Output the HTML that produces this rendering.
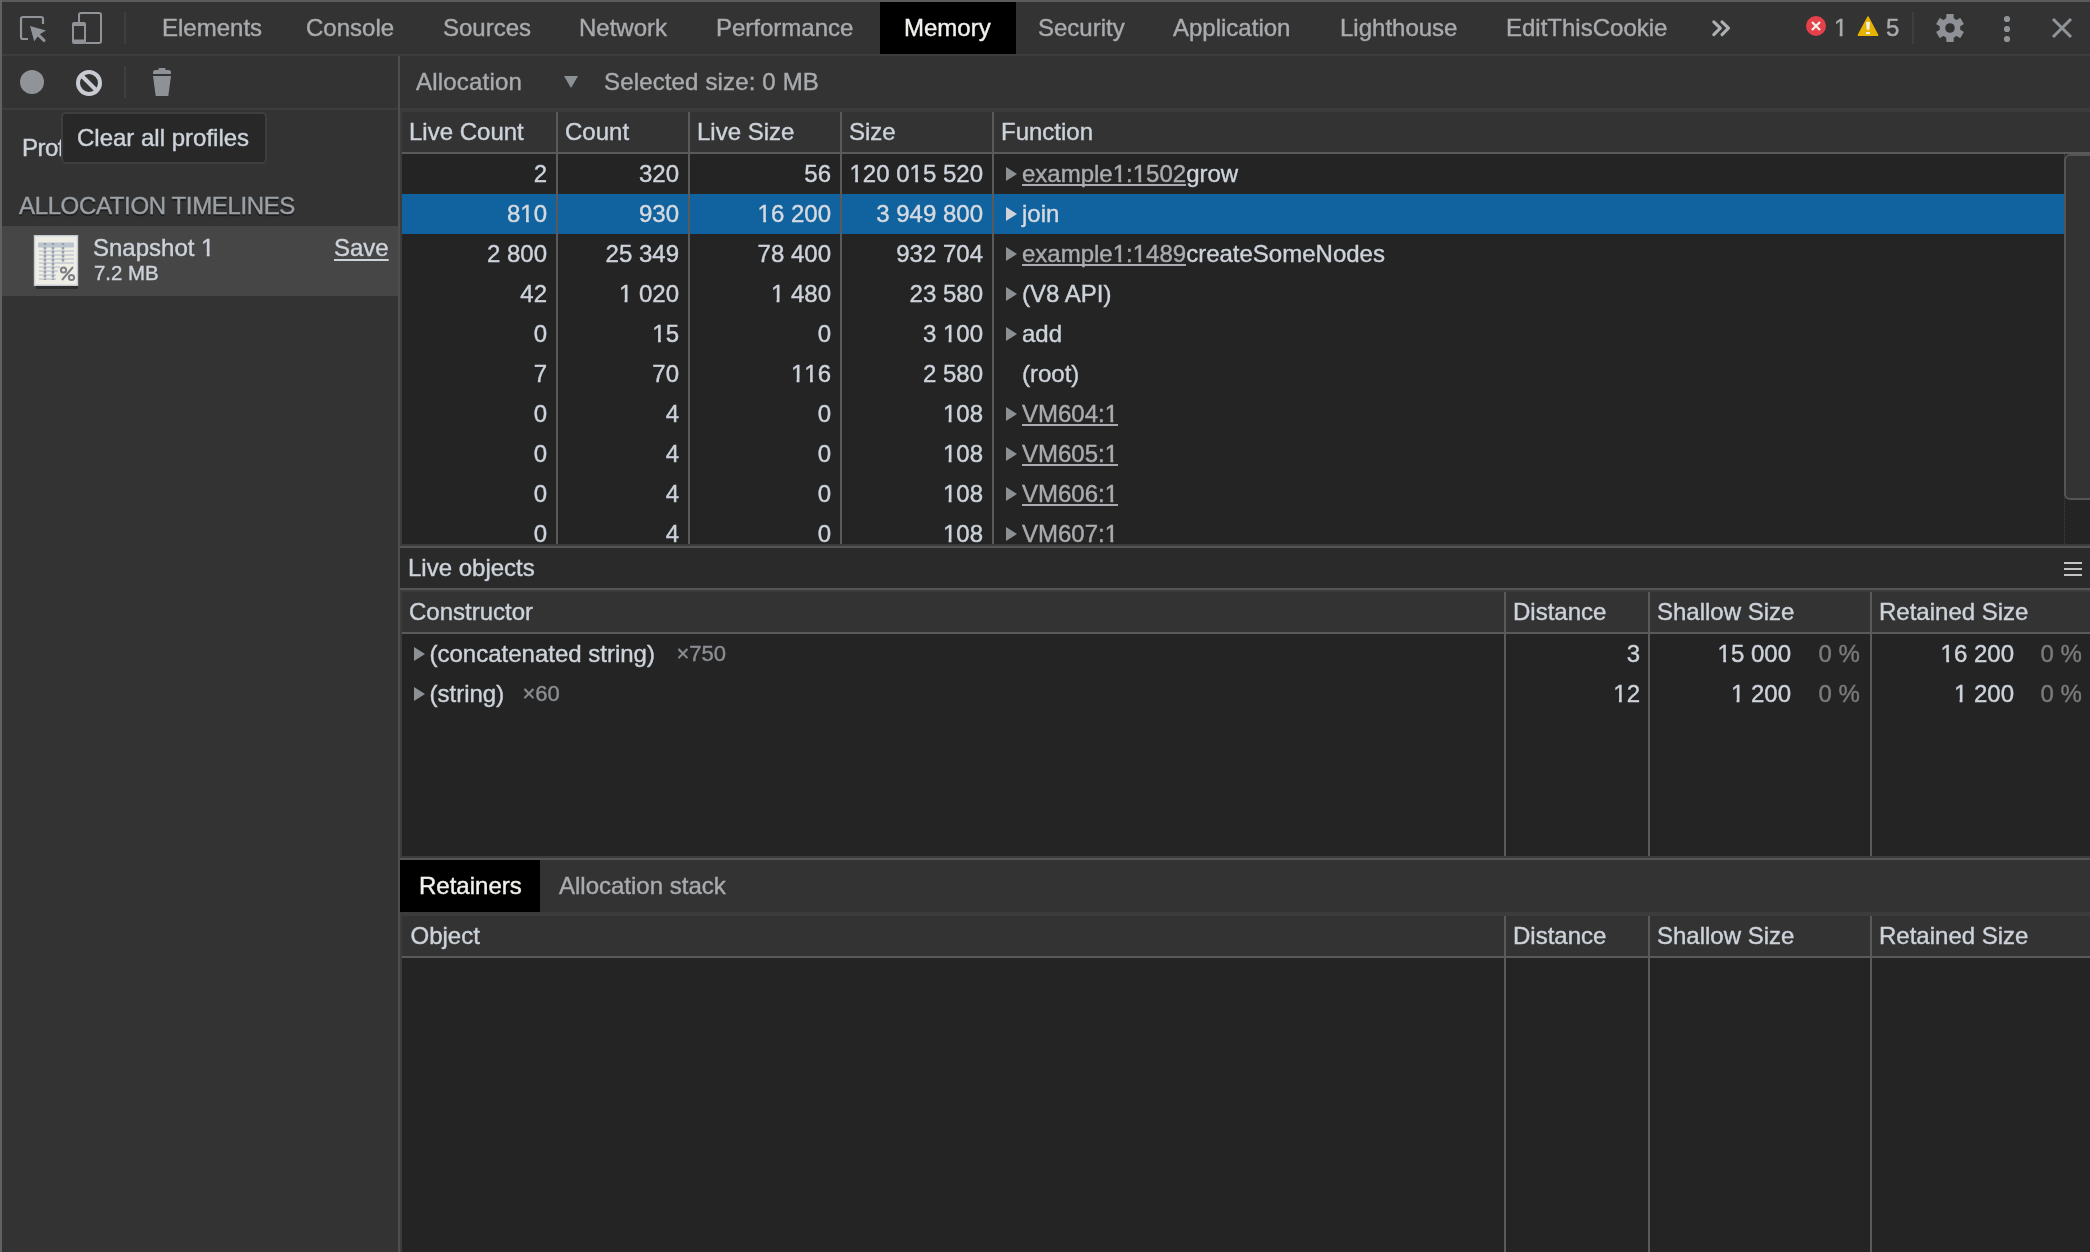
<!DOCTYPE html>
<html><head><meta charset="utf-8">
<style>
*{box-sizing:border-box;margin:0;padding:0}
html,body{width:2090px;height:1252px;overflow:hidden;background:#333;font-family:"Liberation Sans",sans-serif;font-size:24px;color:#cdd3da}
#root{position:absolute;left:0;top:0;width:2090px;height:1252px;overflow:hidden;will-change:transform;background:#333}
.t,.tab{-webkit-text-stroke:0.4px currentColor}
.one{display:inline-block;line-height:normal;clip-path:polygon(0 0,100% 0,100% 19.4px,8.5px 19.4px,8.5px 100%,5.7px 100%,5.7px 19.4px,0 19.4px)}
.a{position:absolute}
.t{position:absolute;white-space:nowrap;line-height:40px;height:40px}
.tab{position:absolute;top:2px;height:52px;line-height:52px;color:#a9abae;white-space:nowrap}
.hl{position:absolute;background:#5a5a5a}
.num{position:absolute;text-align:right;white-space:nowrap;line-height:40px;height:40px}
.tri{position:absolute;width:0;height:0;border-top:7px solid transparent;border-bottom:7px solid transparent;border-left:11px solid #8c9196}
.lnk{color:#a9abae;background:linear-gradient(#a9abae,#a9abae) no-repeat 0 24px/100% 2px}
.dim{color:#7a7a7a}
</style></head><body><div id="root">
<!-- outer borders -->
<div class="a" style="left:0;top:0;width:2090px;height:2px;background:#5b5b5b"></div>
<div class="a" style="left:0;top:0;width:2px;height:1252px;background:#606266"></div>

<!-- ===== TAB BAR ===== -->
<div class="a" style="left:2px;top:54px;width:2088px;height:2px;background:#3d3d3d"></div>
<svg class="a" style="left:16px;top:10px" width="36" height="36" viewBox="16 10 36 36">
 <path d="M28 39H23a2 2 0 0 1-2-2V19a2 2 0 0 1 2-2H41a2 2 0 0 1 2 2V24" fill="none" stroke="#909499" stroke-width="2.2"/>
 <path d="M30 26L46 30.5L40.2 34L37.8 36.4L34.2 41.2Z" fill="#909499"/>
 <path d="M38.6 35.2L44 40.4" stroke="#909499" stroke-width="3" stroke-linecap="round"/>
</svg>
<svg class="a" style="left:68px;top:8px" width="40" height="40" viewBox="68 8 40 40">
 <rect x="79" y="13" width="22" height="30" rx="2" fill="none" stroke="#909499" stroke-width="2"/>
 <rect x="72" y="22" width="14" height="22" rx="2" fill="#333"/>
 <path d="M74 22h10a2 2 0 0 1 2 2v18a2 2 0 0 1-2 2h-10a2 2 0 0 1-2-2v-18a2 2 0 0 1 2-2zM74 26v13.5h10V26z" fill="#909499" fill-rule="evenodd"/>
</svg>
<div class="a" style="left:124px;top:12px;width:2px;height:32px;background:#3f3f3f"></div>

<div class="tab" style="left:138px;padding:0 24px">Elements</div>
<div class="tab" style="left:282px;padding:0 24px">Console</div>
<div class="tab" style="left:419px;padding:0 24px">Sources</div>
<div class="tab" style="left:555px;padding:0 24px">Network</div>
<div class="tab" style="left:692px;padding:0 24px">Performance</div>
<div class="tab" style="left:880px;width:136px;padding:0 24px;background:#000;color:#f2f2ee">Memory</div>
<div class="tab" style="left:1014px;padding:0 24px">Security</div>
<div class="tab" style="left:1149px;padding:0 24px">Application</div>
<div class="tab" style="left:1316px;padding:0 24px">Lighthouse</div>
<div class="tab" style="left:1482px;padding:0 24px">EditThisCookie</div>
<svg class="a" style="left:1706px;top:16px" width="30" height="24" viewBox="1706 16 30 24">
 <path d="M1713.8 21.8L1720.3 28.2L1713.8 34.6M1722 21.8L1728.5 28.2L1722 34.6" fill="none" stroke="#aeb1b4" stroke-width="3.1" stroke-linecap="round" stroke-linejoin="round"/>
</svg>
<!-- error / warning -->
<svg class="a" style="left:1804px;top:14px" width="24" height="24" viewBox="1804 14 24 24">
 <circle cx="1816" cy="26" r="10" fill="#e5414a"/>
 <path d="M1812 22L1820 30M1820 22L1812 30" stroke="#f2f2ea" stroke-width="2.2"/>
</svg>
<div class="tab" style="left:1834px;color:#a9abae"><span class="one">1</span></div>
<svg class="a" style="left:1856px;top:14px" width="24" height="24" viewBox="1856 14 24 24">
 <path d="M1868 17L1877.6 35.2H1858.4Z" fill="#e6b300" stroke="#e6b300" stroke-width="1.6" stroke-linejoin="round"/>
 <path d="M1866.1 22H1870L1869.3 29.8H1866.8Z" fill="#f0f0ea"/>
 <rect x="1866.1" y="32" width="3.9" height="2.1" fill="#f0f0ea"/>
</svg>
<div class="tab" style="left:1886px;color:#a9abae">5</div>
<div class="a" style="left:1912px;top:12px;width:2px;height:32px;background:#3f3f3f"></div>
<svg class="a" style="left:1934px;top:12px" width="32" height="32" viewBox="1934 12 32 32">
 <g fill="#8e9296">
  <circle cx="1950" cy="28" r="10.4"/>
  <rect x="1946.3" y="14" width="7.4" height="28" rx="0.8"/>
  <rect x="1946.3" y="14" width="7.4" height="28" rx="0.8" transform="rotate(60 1950 28)"/>
  <rect x="1946.3" y="14" width="7.4" height="28" rx="0.8" transform="rotate(-60 1950 28)"/>
 </g>
 <circle cx="1950" cy="28" r="4.8" fill="#333"/>
</svg>
<svg class="a" style="left:2000px;top:12px" width="14" height="32" viewBox="2000 12 14 32">
 <circle cx="2007" cy="19" r="3.1" fill="#909499"/><circle cx="2007" cy="29" r="3.1" fill="#909499"/><circle cx="2007" cy="39" r="3.1" fill="#909499"/>
</svg>
<svg class="a" style="left:2048px;top:14px" width="28" height="28" viewBox="2048 14 28 28">
 <path d="M2053 19L2071 37M2071 19L2053 37" stroke="#909499" stroke-width="3"/>
</svg>

<!-- ===== LEFT TOOLBAR ===== -->
<svg class="a" style="left:2px;top:56px" width="396" height="52" viewBox="2 56 396 52">
 <circle cx="32" cy="82" r="12" fill="#909499"/>
 <circle cx="89" cy="83" r="11" fill="none" stroke="#c8ccd2" stroke-width="4"/>
 <path d="M81.5 75.5L96.5 90.5" stroke="#c8ccd2" stroke-width="4"/>
 <path d="M159.5 68h5a1 1 0 0 1 1 1v1h3a2.5 2.5 0 0 1 2.5 2.5v1.5h-18v-1.5a2.5 2.5 0 0 1 2.5-2.5h3v-1a1 1 0 0 1 1-1z" fill="#8e9296"/>
 <path d="M153 76h18l-2.7 20h-12.6z" fill="#8e9296"/>
</svg>
<div class="a" style="left:124px;top:66px;width:2px;height:32px;background:#3f3f3f"></div>
<div class="a" style="left:2px;top:108px;width:396px;height:2px;background:#3d3d3d"></div>
<!-- splitter -->
<div class="a" style="left:398px;top:56px;width:2px;height:1196px;background:#4f4f4f"></div>

<!-- ===== SIDEBAR ===== -->
<div class="t" style="left:22px;top:128px;color:#cdd3da;letter-spacing:-0.5px">Profiles</div>
<div class="a" style="left:61px;top:112px;width:206px;height:52px;background:#282828;border:2px solid #3e3e3e;border-radius:5px"></div>
<div class="t" style="left:77px;top:118px;color:#cdd3da">Clear all profiles</div>
<div class="t" style="left:19px;top:186px;color:#9ba0a5;text-shadow:0 2px 1px #1a1a1a;letter-spacing:-0.36px">ALLOCATION TIMELINES</div>
<div class="a" style="left:2px;top:226px;width:396px;height:70px;background:#464646"></div>
<div class="a" style="left:36px;top:285px;width:42px;height:4px;background:#2e2e2e"></div>
<svg class="a" style="left:33px;top:235px" width="46" height="52" viewBox="33 235 46 52">
 <rect x="34.5" y="235.7" width="43" height="49.6" fill="#efeee6" stroke="#c5cbd3" stroke-width="1.4"/>
 <rect x="38" y="242.5" width="36" height="5" fill="#bcc4cf"/>
 <path d="M39 251H74M39 255H74M39 259H74M39 263H74M39 267H60M39 271H58M39 275H56M39 279H56" stroke="#c3cad3" stroke-width="1.6"/>
 <path d="M45 243V280M53 243V280M63 243V262" stroke="#bcc4cf" stroke-width="2.4"/>
 <path d="M45 243V280M53 243V280M63 243V262" stroke="#9a9ea3" stroke-width="2.4" stroke-dasharray="2 2"/>
 <path d="M62 280L73 267" stroke="#7d7f83" stroke-width="2"/>
 <circle cx="63.5" cy="270" r="2.6" fill="none" stroke="#7d7f83" stroke-width="2"/>
 <circle cx="71.5" cy="277.5" r="2.6" fill="none" stroke="#7d7f83" stroke-width="2"/>
</svg>
<div class="t" style="left:93px;top:227.5px;color:#cdd3da">Snapshot <span class="one">1</span></div>
<div class="t" style="left:94px;top:252.7px;color:#cdd3da;font-size:20.4px">7.2 MB</div>
<div class="t" style="left:334px;top:227.5px;color:#cdd3da;text-decoration:underline;text-underline-offset:2.5px">Save</div>

<!-- ===== RIGHT TOOLBAR ===== -->
<div class="tab" style="left:416px;top:56px;color:#a9abae;letter-spacing:0.2px">Allocation</div>
<svg class="a" style="left:562px;top:74px" width="18" height="16" viewBox="562 74 18 16">
 <path d="M564 76H578L571 88Z" fill="#8c9196"/>
</svg>
<div class="tab" style="left:604px;top:56px;color:#a9abae;letter-spacing:0.15px">Selected size: 0 MB</div>
<div class="a" style="left:400px;top:108px;width:1690px;height:4px;background:#3c3c3c"></div>

<!-- ===== TOP GRID ===== -->
<!--GRIDS-->
<div class="a" style="left:400px;top:112px;width:2px;height:432px;background:#3c3c3c;"></div>
<div class="a" style="left:402px;top:112px;width:1688px;height:40px;background:#333;"></div>
<div class="a" style="left:402px;top:152px;width:1688px;height:2px;background:#5a5a5a;"></div>
<div class="a" style="left:402px;top:154px;width:1688px;height:390px;background:#242424;"></div>
<div class="a" style="left:402px;top:194px;width:1662px;height:40px;background:#11639f;"></div>
<div class="a" style="left:556px;top:112px;width:2px;height:432px;background:#5a5a5a;"></div>
<div class="a" style="left:688px;top:112px;width:2px;height:432px;background:#5a5a5a;"></div>
<div class="a" style="left:840px;top:112px;width:2px;height:432px;background:#5a5a5a;"></div>
<div class="a" style="left:992px;top:112px;width:2px;height:432px;background:#5a5a5a;"></div>
<div class="t" style="left:409px;top:112px;">Live Count</div>
<div class="t" style="left:565px;top:112px;">Count</div>
<div class="t" style="left:697px;top:112px;">Live Size</div>
<div class="t" style="left:849px;top:112px;">Size</div>
<div class="t" style="left:1001px;top:112px;">Function</div>
<div class="a" style="left:0;top:0;width:2090px;height:544px;overflow:hidden">
<div class="t" style="right:1543px;top:154px;">2</div>
<div class="t" style="right:1411px;top:154px;">320</div>
<div class="t" style="right:1259px;top:154px;">56</div>
<div class="t" style="right:1107px;top:154px;"><span class="one">1</span>20 0<span class="one">1</span>5 520</div>
<div class="tri" style="left:1006px;top:167px;border-left-color:#8c9196"></div>
<div class="t" style="left:1022px;top:154px;"><span class="lnk">example<span class="one">1</span>:<span class="one">1</span>502</span>grow</div>
<div class="t" style="right:1543px;top:194px;color:#d6dae0">8<span class="one">1</span>0</div>
<div class="t" style="right:1411px;top:194px;color:#d6dae0">930</div>
<div class="t" style="right:1259px;top:194px;color:#d6dae0"><span class="one">1</span>6 200</div>
<div class="t" style="right:1107px;top:194px;color:#d6dae0">3 949 800</div>
<div class="tri" style="left:1006px;top:207px;border-left-color:#d0d4d9"></div>
<div class="t" style="left:1022px;top:194px;color:#d6dae0">join</div>
<div class="t" style="right:1543px;top:234px;">2 800</div>
<div class="t" style="right:1411px;top:234px;">25 349</div>
<div class="t" style="right:1259px;top:234px;">78 400</div>
<div class="t" style="right:1107px;top:234px;">932 704</div>
<div class="tri" style="left:1006px;top:247px;border-left-color:#8c9196"></div>
<div class="t" style="left:1022px;top:234px;"><span class="lnk">example<span class="one">1</span>:<span class="one">1</span>489</span>createSomeNodes</div>
<div class="t" style="right:1543px;top:274px;">42</div>
<div class="t" style="right:1411px;top:274px;"><span class="one">1</span> 020</div>
<div class="t" style="right:1259px;top:274px;"><span class="one">1</span> 480</div>
<div class="t" style="right:1107px;top:274px;">23 580</div>
<div class="tri" style="left:1006px;top:287px;border-left-color:#8c9196"></div>
<div class="t" style="left:1022px;top:274px;">(V8 API)</div>
<div class="t" style="right:1543px;top:314px;">0</div>
<div class="t" style="right:1411px;top:314px;"><span class="one">1</span>5</div>
<div class="t" style="right:1259px;top:314px;">0</div>
<div class="t" style="right:1107px;top:314px;">3 <span class="one">1</span>00</div>
<div class="tri" style="left:1006px;top:327px;border-left-color:#8c9196"></div>
<div class="t" style="left:1022px;top:314px;">add</div>
<div class="t" style="right:1543px;top:354px;">7</div>
<div class="t" style="right:1411px;top:354px;">70</div>
<div class="t" style="right:1259px;top:354px;"><span class="one">1</span><span class="one">1</span>6</div>
<div class="t" style="right:1107px;top:354px;">2 580</div>
<div class="t" style="left:1022px;top:354px;">(root)</div>
<div class="t" style="right:1543px;top:394px;">0</div>
<div class="t" style="right:1411px;top:394px;">4</div>
<div class="t" style="right:1259px;top:394px;">0</div>
<div class="t" style="right:1107px;top:394px;"><span class="one">1</span>08</div>
<div class="tri" style="left:1006px;top:407px;border-left-color:#8c9196"></div>
<div class="t" style="left:1022px;top:394px;"><span class="lnk">VM604:<span class="one">1</span></span></div>
<div class="t" style="right:1543px;top:434px;">0</div>
<div class="t" style="right:1411px;top:434px;">4</div>
<div class="t" style="right:1259px;top:434px;">0</div>
<div class="t" style="right:1107px;top:434px;"><span class="one">1</span>08</div>
<div class="tri" style="left:1006px;top:447px;border-left-color:#8c9196"></div>
<div class="t" style="left:1022px;top:434px;"><span class="lnk">VM605:<span class="one">1</span></span></div>
<div class="t" style="right:1543px;top:474px;">0</div>
<div class="t" style="right:1411px;top:474px;">4</div>
<div class="t" style="right:1259px;top:474px;">0</div>
<div class="t" style="right:1107px;top:474px;"><span class="one">1</span>08</div>
<div class="tri" style="left:1006px;top:487px;border-left-color:#8c9196"></div>
<div class="t" style="left:1022px;top:474px;"><span class="lnk">VM606:<span class="one">1</span></span></div>
<div class="t" style="right:1543px;top:514px;">0</div>
<div class="t" style="right:1411px;top:514px;">4</div>
<div class="t" style="right:1259px;top:514px;">0</div>
<div class="t" style="right:1107px;top:514px;"><span class="one">1</span>08</div>
<div class="tri" style="left:1006px;top:527px;border-left-color:#8c9196"></div>
<div class="t" style="left:1022px;top:514px;"><span class="lnk">VM607:<span class="one">1</span></span></div>
</div>
<div class="a" style="left:2064px;top:154px;width:26px;height:390px;background:#242424;border-left:1px dotted #404040"></div>
<div class="a" style="left:2064px;top:154px;width:32px;height:346px;background:#333;border:2px solid #555;border-radius:6px"></div>
<div class="a" style="left:400px;top:544px;width:1690px;height:2px;background:#3c3c3c;"></div>
<div class="a" style="left:400px;top:546px;width:1690px;height:2px;background:#555;"></div>
<div class="a" style="left:400px;top:548px;width:1690px;height:40px;background:#2a2a2a;"></div>
<div class="t" style="left:408px;top:548px;">Live objects</div>
<div class="a" style="left:2064px;top:562px;width:18px;height:2px;background:#c4c4c4;"></div>
<div class="a" style="left:2064px;top:568px;width:18px;height:2px;background:#c4c4c4;"></div>
<div class="a" style="left:2064px;top:574px;width:18px;height:2px;background:#c4c4c4;"></div>
<div class="a" style="left:400px;top:588px;width:1690px;height:2px;background:#555;"></div>
<div class="a" style="left:400px;top:590px;width:1690px;height:2px;background:#3c3c3c;"></div>
<div class="a" style="left:400px;top:592px;width:2px;height:264px;background:#3c3c3c;"></div>
<div class="a" style="left:402px;top:592px;width:1688px;height:40px;background:#333;"></div>
<div class="a" style="left:402px;top:632px;width:1688px;height:2px;background:#5a5a5a;"></div>
<div class="a" style="left:402px;top:634px;width:1688px;height:222px;background:#242424;"></div>
<div class="a" style="left:1504px;top:592px;width:2px;height:264px;background:#5a5a5a;"></div>
<div class="a" style="left:1648px;top:592px;width:2px;height:264px;background:#5a5a5a;"></div>
<div class="a" style="left:1870px;top:592px;width:2px;height:264px;background:#5a5a5a;"></div>
<div class="t" style="left:409px;top:592px;">Constructor</div>
<div class="t" style="left:1513px;top:592px;">Distance</div>
<div class="t" style="left:1657px;top:592px;">Shallow Size</div>
<div class="t" style="left:1879px;top:592px;">Retained Size</div>
<div class="tri" style="left:414px;top:647px;border-left-color:#8c9196"></div>
<div class="t" style="left:429.5px;top:634px;">(concatenated string)</div>
<div class="t" style="left:676.5px;top:634px;color:#8b8f93;font-size:22px">×750</div>
<div class="t" style="right:450px;top:634px;">3</div>
<div class="t" style="right:299px;top:634px;"><span class="one">1</span>5 000</div>
<div class="t" style="left:1818.5px;top:634px;color:#7b7b7b">0 %</div>
<div class="t" style="right:76px;top:634px;"><span class="one">1</span>6 200</div>
<div class="t" style="left:2040.5px;top:634px;color:#7b7b7b">0 %</div>
<div class="tri" style="left:414px;top:687px;border-left-color:#8c9196"></div>
<div class="t" style="left:429.5px;top:674px;">(string)</div>
<div class="t" style="left:522.5px;top:674px;color:#8b8f93;font-size:22px">×60</div>
<div class="t" style="right:450px;top:674px;"><span class="one">1</span>2</div>
<div class="t" style="right:299px;top:674px;"><span class="one">1</span> 200</div>
<div class="t" style="left:1818.5px;top:674px;color:#7b7b7b">0 %</div>
<div class="t" style="right:76px;top:674px;"><span class="one">1</span> 200</div>
<div class="t" style="left:2040.5px;top:674px;color:#7b7b7b">0 %</div>
<div class="a" style="left:400px;top:856px;width:1690px;height:2px;background:#3c3c3c;"></div>
<div class="a" style="left:400px;top:858px;width:1690px;height:2px;background:#555;"></div>
<div class="a" style="left:400px;top:860px;width:1690px;height:52px;background:#333;"></div>
<div class="a" style="left:400px;top:860px;width:140px;height:52px;background:#000;"></div>
<div class="tab" style="left:419px;top:860px;color:#f2f2ee">Retainers</div>
<div class="tab" style="left:559px;top:860px;color:#a9abae">Allocation stack</div>
<div class="a" style="left:400px;top:912px;width:1690px;height:4px;background:#3c3c3c;"></div>
<div class="a" style="left:400px;top:916px;width:2px;height:336px;background:#3c3c3c;"></div>
<div class="a" style="left:402px;top:916px;width:1688px;height:40px;background:#333;"></div>
<div class="a" style="left:402px;top:956px;width:1688px;height:2px;background:#5a5a5a;"></div>
<div class="a" style="left:402px;top:958px;width:1688px;height:294px;background:#242424;"></div>
<div class="a" style="left:1504px;top:916px;width:2px;height:336px;background:#5a5a5a;"></div>
<div class="a" style="left:1648px;top:916px;width:2px;height:336px;background:#5a5a5a;"></div>
<div class="a" style="left:1870px;top:916px;width:2px;height:336px;background:#5a5a5a;"></div>
<div class="t" style="left:410.5px;top:916px;">Object</div>
<div class="t" style="left:1513px;top:916px;">Distance</div>
<div class="t" style="left:1657px;top:916px;">Shallow Size</div>
<div class="t" style="left:1879px;top:916px;">Retained Size</div>
<!--/GRIDS-->
</div></body></html>
